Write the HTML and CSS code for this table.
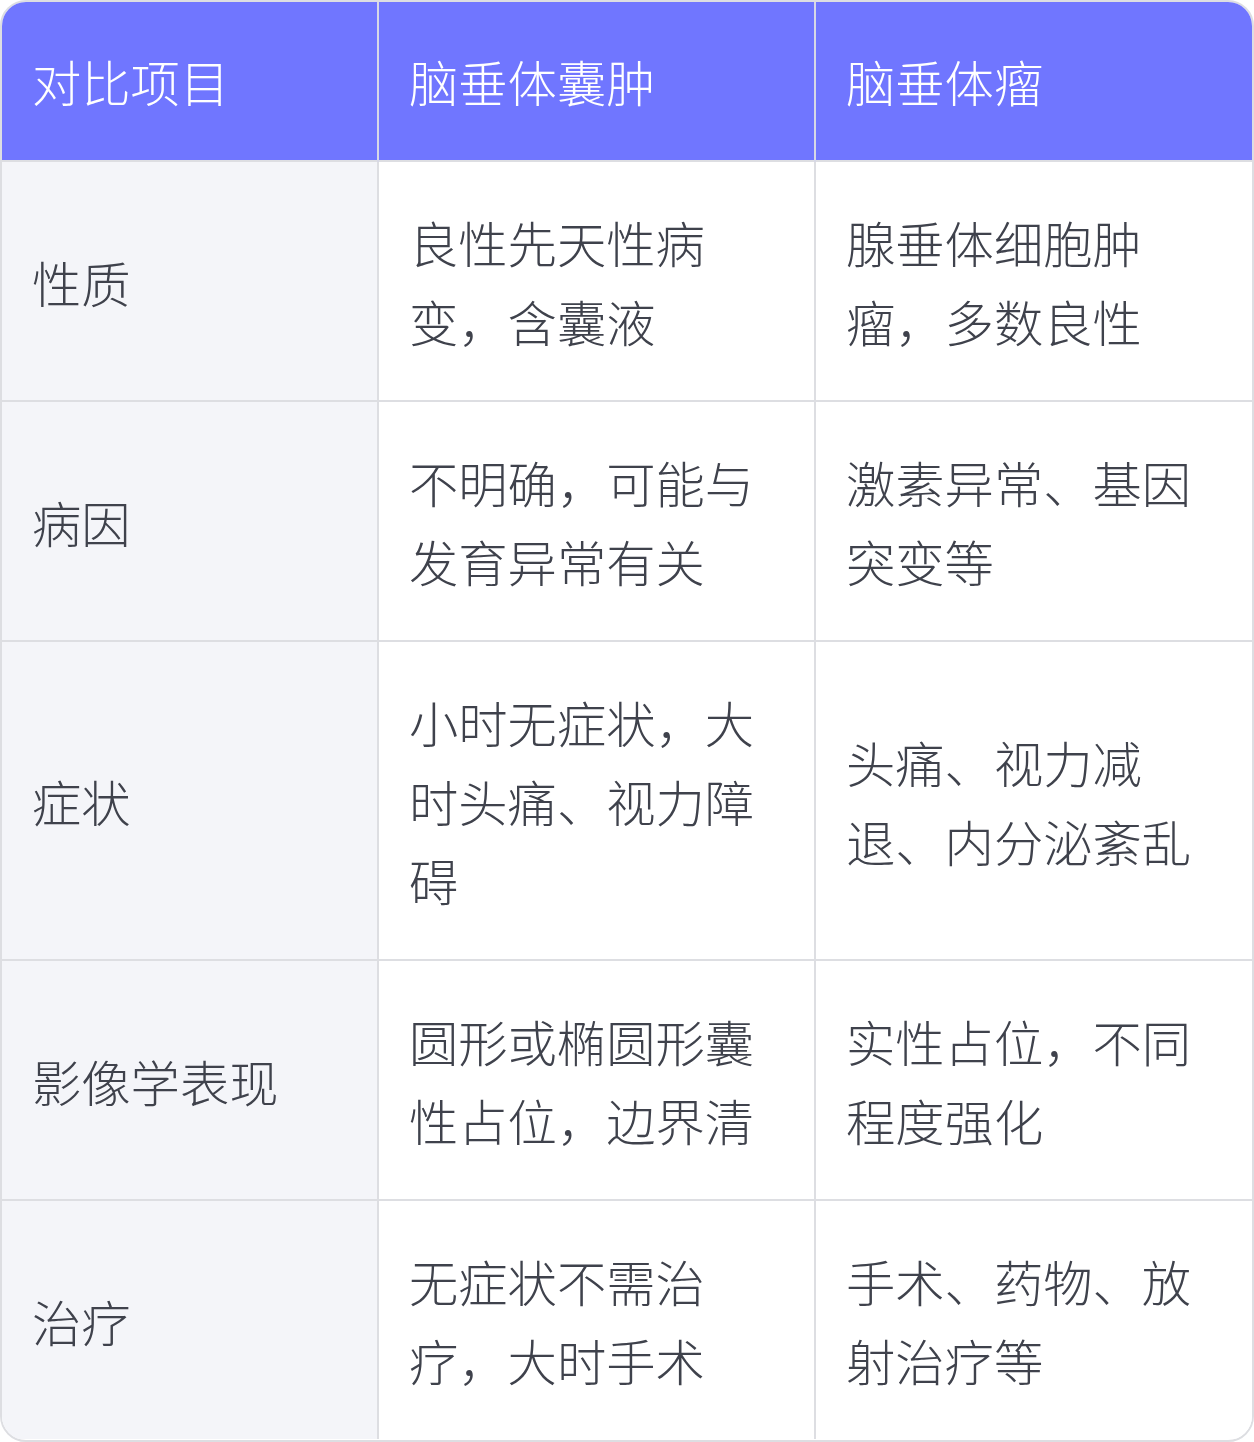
FILE: index.html
```html
<!DOCTYPE html>
<html lang="zh-CN">
<head>
<meta charset="utf-8">
<link rel="stylesheet" href="styles.css">
</head>
<body>
<div class="wrap">
<table class="cmp">
  <colgroup><col class="c1"><col class="c2"><col class="c3"></colgroup>
  <thead>
    <tr><th>对比项目</th><th>脑垂体囊肿</th><th>脑垂体瘤</th></tr>
  </thead>
  <tbody>
    <tr><td>性质</td><td>良性先天性病变，含囊液</td><td>腺垂体细胞肿瘤，多数良性</td></tr>
    <tr><td>病因</td><td>不明确，可能与发育异常有关</td><td>激素异常、基因突变等</td></tr>
    <tr><td>症状</td><td>小时无症状，大时头痛、视力障碍</td><td>头痛、视力减退、内分泌紊乱</td></tr>
    <tr><td>影像学表现</td><td>圆形或椭圆形囊性占位，边界清</td><td>实性占位，不同程度强化</td></tr>
    <tr><td>治疗</td><td>无症状不需治疗，大时手术</td><td>手术、药物、放射治疗等</td></tr>
  </tbody>
</table>
</div>
</body>
</html>
```
FILE: styles.css
```css
html, body {
  margin: 0;
  padding: 0;
  background: #ffffff;
}
.wrap {
  width: 1254px;
  height: 1442px;
  box-sizing: border-box;
  border: 2px solid #dddee2;
  border-radius: 26px;
  overflow: hidden;
}
.cmp {
  width: 100%;
  border-collapse: collapse;
  table-layout: fixed;
  font-family: "Noto Sans CJK SC", "Noto Sans", sans-serif;
  font-size: 49.3px;
  font-weight: 300;
  line-height: 79px;
  color: #3f424c;
}
.c1 { width: 376px; }
.c2 { width: 437px; }
.c3 { width: auto; }
.cmp th {
  background: #7076ff;
  color: #ffffff;
  font-weight: 300;
  text-align: left;
  padding: 39px 30px 40px;
  border-left: 2px solid #d7d8e6;
}
.cmp th:first-child { border-left: none; padding-left: 30px; }
.cmp td {
  padding: 40px 30px;
  border-top: 2px solid #dddee2;
  border-left: 2px solid #dddee2;
  vertical-align: middle;
  background: #ffffff;
}
.cmp td:first-child {
  border-left: none;
  background: #f4f5f9;
  padding-left: 30px;
}
```
